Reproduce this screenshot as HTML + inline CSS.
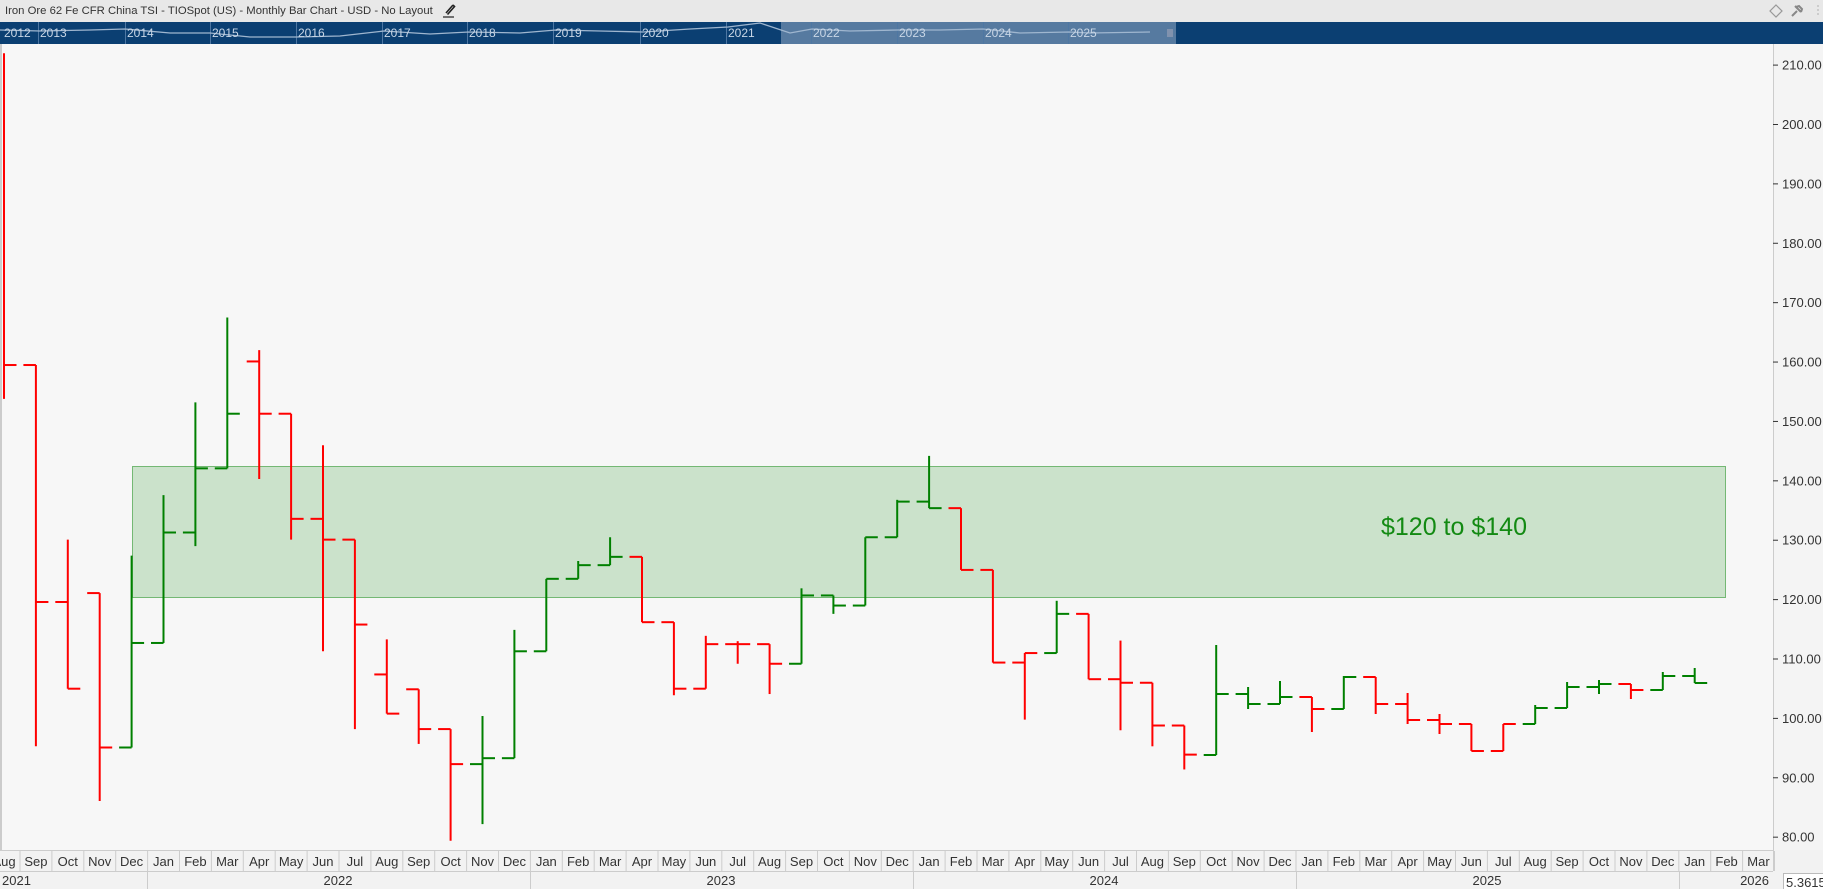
<!DOCTYPE html>
<html><head><meta charset="utf-8"><style>
*{margin:0;padding:0;box-sizing:border-box}
body{width:1823px;height:889px;overflow:hidden;background:#f7f7f7;font-family:"Liberation Sans",sans-serif;position:relative}
#title{position:absolute;left:0;top:0;width:1823px;height:22px;background:#e8e8e8;font-size:11.3px;color:#333;padding:5px 0 0 5px;white-space:nowrap}
#nav{position:absolute;left:0;top:22px;width:1823px;height:22px;background:#0b3f72}
svg{position:absolute;left:0;top:0}
</style></head><body>
<div id="title">Iron Ore 62 Fe CFR China TSI - TIOSpot (US) - Monthly Bar Chart - USD - No Layout</div>
<div id="nav"></div>
<svg id="s" width="1823" height="889" xmlns="http://www.w3.org/2000/svg" font-family="Liberation Sans, sans-serif">
<path d="M453 5 l-7 8 M453 5 l1.5 1.5 l-7 8" stroke="#222" stroke-width="1.6" fill="none"/>
<line x1="443" y1="17" x2="454" y2="17" stroke="#222" stroke-width="1.2"/>
<path d="M1776 5 l6 6 l-6 6 l-6 -6 z" fill="none" stroke="#999" stroke-width="1.2"/>
<path d="M1792 16 l5 -5 M1795 6 l6 6 M1796 7 l3 -1 l3 3 l-1 3" stroke="#888" stroke-width="2" fill="none"/>
<path d="M1818 5 v12" stroke="#ccc" stroke-width="2" stroke-dasharray="2 2"/>
<rect x="781" y="22" width="395" height="22" fill="#567aa0"/>
<g stroke="#4e77a3" stroke-width="1" id="navlines"></g>
<polyline fill="none" stroke="#9fb6cf" stroke-width="1.3" points="0,30 40,31 90,30 125,29 170,33 210,33 250,37 297,37 340,36 384,31 430,34 469,32 520,33 556,30 600,31 643,32 690,29 728,27 760,23 790,33 812,29 850,31 898,30 940,30 983,29 1020,33 1069,32 1090,33 1150,32"/>
<g fill="#c8d6e6" font-size="12" id="navtxt"></g>
<g stroke="#aab" stroke-width="1"><line x1="1168" y1="29" x2="1168" y2="37"/><line x1="1170" y1="29" x2="1170" y2="37"/><line x1="1172" y1="29" x2="1172" y2="37"/></g>
<line x1="1" y1="44" x2="1" y2="850" stroke="#ccc" stroke-width="2"/>
<rect x="1773" y="44" width="50" height="806" fill="#f4f4f4"/>
<line x1="1773.5" y1="44" x2="1773.5" y2="850" stroke="#ccc"/>
<g id="pl" font-size="13" fill="#333"></g>
<rect x="132.5" y="466.5" width="1593" height="131" fill="#cbe2cb" stroke="#74b874" stroke-width="1"/>
<text x="1454" y="535" font-size="25" fill="#138a13" text-anchor="middle">$120 to $140</text>
<g id="bars" stroke-width="2" fill="none"></g>
<rect x="0" y="850" width="1823" height="39" fill="#f2f2f2"/>
<line x1="0" y1="850.5" x2="1773" y2="850.5" stroke="#ccc"/>
<line x1="0" y1="871.5" x2="1773" y2="871.5" stroke="#ccc"/>
<line x1="1773.5" y1="850" x2="1773.5" y2="871" stroke="#ccc"/>
<g id="mon" font-size="13" fill="#333" text-anchor="middle"></g>
<g font-size="13" fill="#333">
<text x="2" y="885">2021</text>
<text x="338" y="885" text-anchor="middle">2022</text>
<text x="721" y="885" text-anchor="middle">2023</text>
<text x="1104" y="885" text-anchor="middle">2024</text>
<text x="1487" y="885" text-anchor="middle">2025</text>
<text x="1769" y="885" text-anchor="end">2026</text>
</g>
<g stroke="#ccc"><line x1="147.5" y1="871" x2="147.5" y2="889"/><line x1="530.5" y1="871" x2="530.5" y2="889"/><line x1="913.5" y1="871" x2="913.5" y2="889"/><line x1="1296.5" y1="871" x2="1296.5" y2="889"/><line x1="1679.5" y1="871" x2="1679.5" y2="889"/></g>
<rect x="1783.5" y="873.5" width="45" height="18" fill="#fff" stroke="#bbb"/>
<text x="1786" y="887" font-size="13" fill="#333">5.36153</text>
</svg>
<script>
const NS="http://www.w3.org/2000/svg";
function el(p,t,a,txt){const e=document.createElementNS(NS,t);for(const k in a)e.setAttribute(k,a[k]);if(txt)e.textContent=txt;document.getElementById(p).appendChild(e);}
const ny=[["2012",3],["2013",39],["2014",126],["2015",211],["2016",297],["2017",383],["2018",468],["2019",554],["2020",641],["2021",727],["2022",812],["2023",898],["2024",984],["2025",1069]];
ny.forEach(a=>{el("navtxt","text",{x:a[1]+1,y:37},a[0]);if(a[1]>10)el("navlines","line",{x1:a[1]-0.5,y1:22,x2:a[1]-0.5,y2:44});});
for(let p=80;p<=210;p+=10){const y=65.1+(210-p)*5.939;el("pl","line",{x1:1773,y1:y,x2:1778,y2:y,stroke:"#333"});el("pl","text",{x:1782,y:y+4.5},p.toFixed(2));}
const Y=p=>65.1+(210-p)*5.939;
const R="#ff0000",G="#008000";
const d=[[null,212,153.8,159.5,R],[159.5,159.5,95.3,119.6,R],[119.6,130.1,105,105,R],[121.1,121.1,86.1,95.1,R],[95.1,127.4,95.1,112.7,G],[112.7,137.6,112.7,131.3,G],[131.3,153.2,129,142.1,G],[142.1,167.5,142.1,151.3,G],[160.1,162,140.3,151.3,R],[151.3,151.3,130.1,133.6,R],[133.6,146,111.3,130.1,R],[130.1,130.1,98.2,115.8,R],[107.4,113.3,100.8,100.8,R],[104.9,104.9,95.7,98.2,R],[98.2,98.2,79.4,92.3,R],[92.3,100.4,82.2,93.3,G],[93.3,114.9,93.3,111.3,G],[111.3,123.5,111.3,123.5,G],[123.5,126.5,123.5,125.8,G],[125.8,130.5,125.8,127.2,G],[127.2,127.2,116.2,116.2,R],[116.2,116.2,103.9,105,R],[105,113.9,105,112.5,R],[112.5,113,109.2,112.5,R],[112.5,112.5,104.1,109.2,R],[109.2,121.9,109.2,120.7,G],[120.7,120.7,117.6,119,G],[119,130.5,119,130.5,G],[130.5,136.8,130.5,136.5,G],[136.5,144.2,135.4,135.4,G],[135.4,135.4,125,125,R],[125,125,109.4,109.4,R],[109.4,111,99.8,111,R],[111,119.8,111,117.6,G],[117.6,117.6,106.6,106.6,R],[106.6,113.1,98,106,R],[106,106,95.3,98.8,R],[98.8,98.8,91.4,93.9,R]].map(a=>[a[0]==null?null:Y(a[0]),Y(a[1]),Y(a[2]),Y(a[3]),a[4]]);
const d2=[[755,645,755,694,G],[694,687,709,704,G],[704,681,704,697,G],[697,697,732,709,R],[709,676,709,677,G],[677,677,714,704,R],[704,693,724,720,R],[720,714,734,724,R],[724,724,751,751,R],[751,724,751,724,R],[724,705,724,708,G],[708,682,708,687,G],[687,680,694,684,G],[684,684,699,690,R],[690,672,690,676,G],[676,668,683,683,G]];
d.concat(d2).forEach((b,n)=>{const x=4+31.9*n;
el("bars","line",{x1:x,y1:b[1],x2:x,y2:b[2],stroke:b[4]});
if(b[0]!=null)el("bars","line",{x1:x-12.5,y1:b[0],x2:x,y2:b[0],stroke:b[4]});
el("bars","line",{x1:x,y1:b[3],x2:x+12.5,y2:b[3],stroke:b[4]});});
const m=["Aug","Sep","Oct","Nov","Dec","Jan","Feb","Mar","Apr","May","Jun","Jul"];
for(let n=0;n<=55;n++){const x=4+31.9*n;el("mon","text",{x:x,y:866},m[n%12]);el("mon","line",{x1:x+16,y1:851,x2:x+16,y2:871,stroke:"#ccc"});}
</script>
</body></html>
